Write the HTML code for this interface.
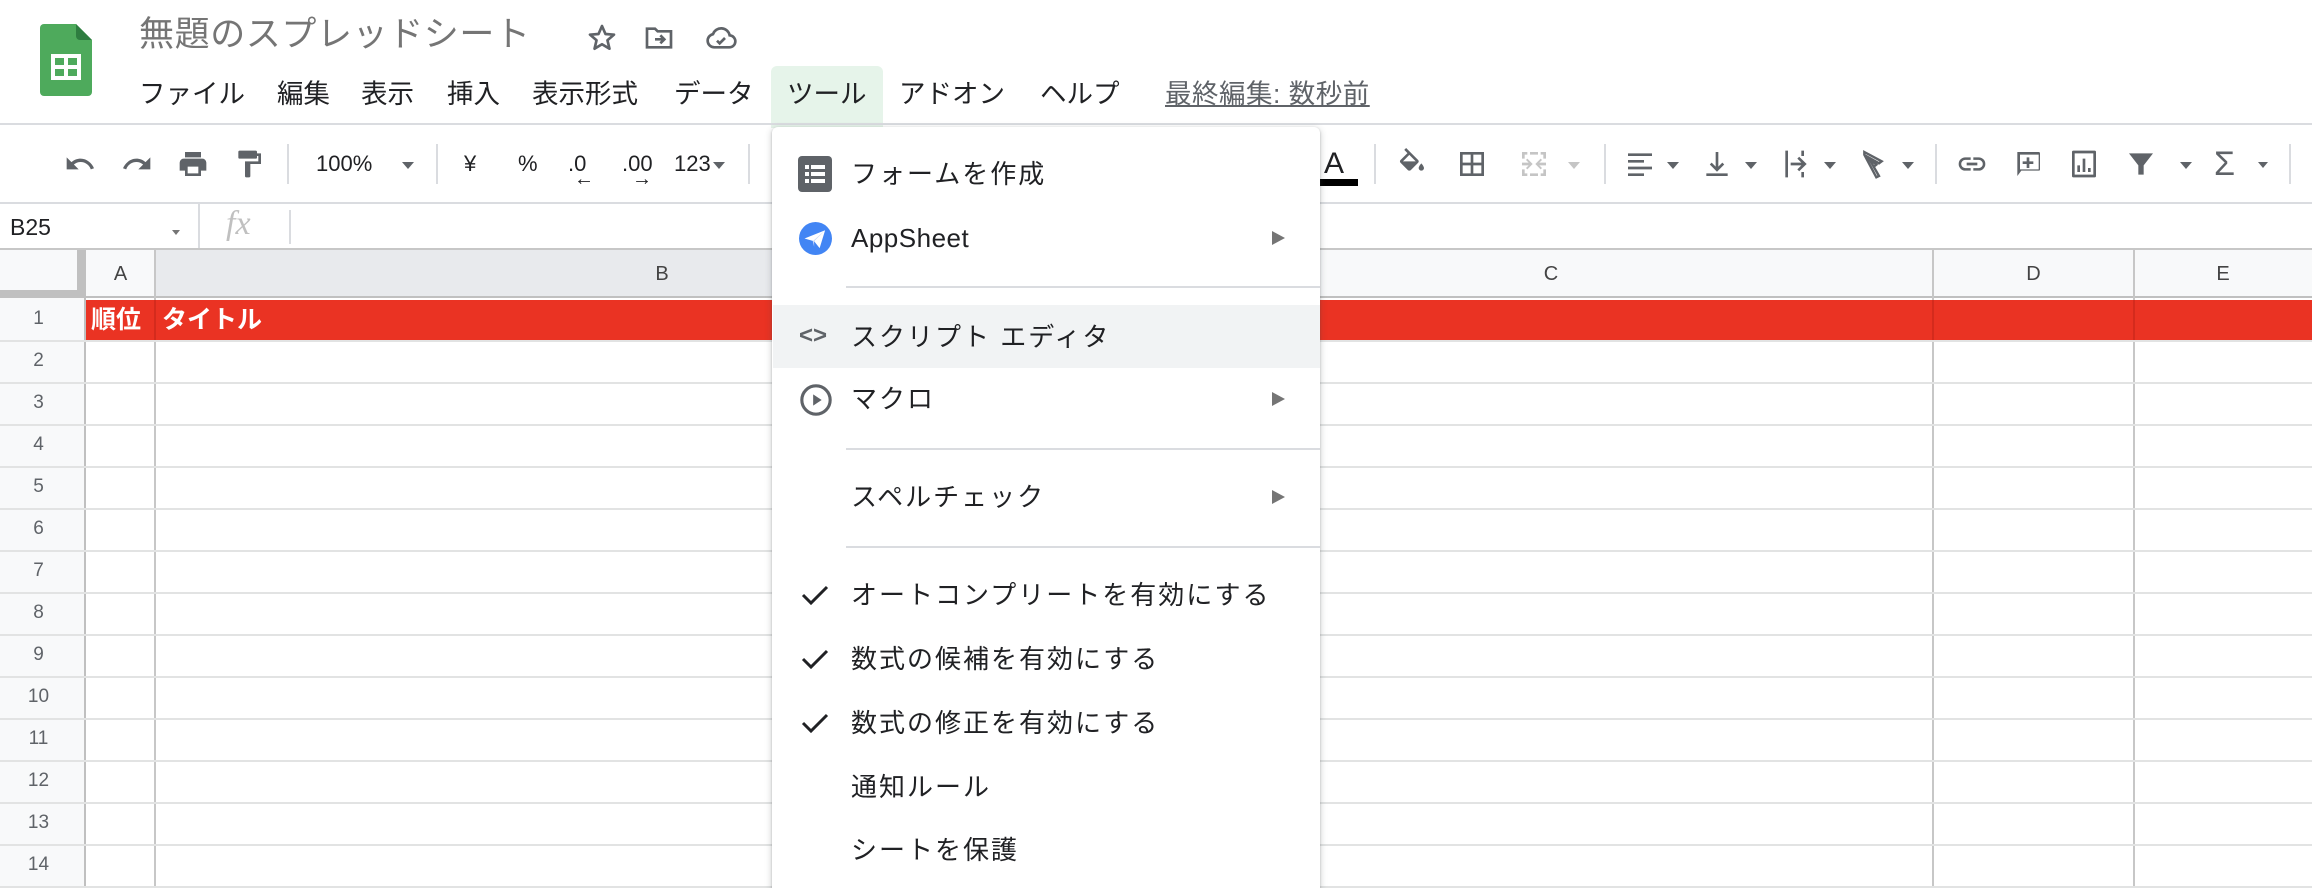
<!DOCTYPE html>
<html><head><meta charset="utf-8">
<style>
*{margin:0;padding:0;box-sizing:border-box}
body{width:2312px;height:888px;overflow:hidden;background:#fff;font-family:"Liberation Sans","Noto Sans CJK JP",sans-serif;position:relative;color:#202124}
.a{position:absolute}
.mb{position:absolute;top:76px;font-size:26.5px;color:#202124;line-height:36px}
.tb{position:absolute;top:146px;height:36px;color:#5f6368;font-size:22px;line-height:36px}
.sep{position:absolute;width:2px;background:#dadce0}
.row{position:absolute;left:0;width:2312px;height:2px;background:#e2e3e3}
.rn{position:absolute;left:0;width:77px;text-align:center;font-size:19px;color:#5f6368;line-height:42px}
.vl{position:absolute;top:250px;width:2px;height:638px;background:#e2e3e3}
.mi{position:absolute;left:851px;font-size:26px;color:#202124;letter-spacing:2px;line-height:40px}
.arr{position:absolute;left:1272px;width:0;height:0;border-top:7px solid transparent;border-bottom:7px solid transparent;border-left:13px solid #757575}
.msep{position:absolute;left:846px;width:474px;height:2px;background:#dadce0}
.chk{position:absolute;left:800px}
.dd{display:inline-block;width:0;height:0;border-left:6px solid transparent;border-right:6px solid transparent;border-top:7px solid #5f6368;vertical-align:middle}
</style></head><body>

<!-- logo -->
<svg class="a" style="left:40px;top:24px" width="52" height="72" viewBox="0 0 52 72">
<path d="M4 0H36L52 16V68a4 4 0 0 1-4 4H4a4 4 0 0 1-4-4V4a4 4 0 0 1 4-4z" fill="#4eaa5c"/>
<path d="M36 0L52 16H40a4 4 0 0 1-4-4z" fill="#2e7d40"/>
<rect x="11" y="30" width="30" height="26" fill="#fff"/>
<rect x="15" y="34" width="9" height="7" fill="#4eaa5c"/><rect x="28" y="34" width="9" height="7" fill="#4eaa5c"/>
<rect x="15" y="45" width="9" height="7" fill="#4eaa5c"/><rect x="28" y="45" width="9" height="7" fill="#4eaa5c"/>
</svg>
<div class="a" style="left:139px;top:13px;font-size:35px;letter-spacing:0.6px;color:#757575;line-height:44px">無題のスプレッドシート</div>
<svg class="a" style="left:586px;top:22px" width="32" height="32" viewBox="0 0 24 24"><path d="M12 3l2.6 6 6.4.5-4.9 4.2 1.5 6.3L12 16.7 6.4 20l1.5-6.3L3 9.5 9.4 9z" fill="none" stroke="#5f6368" stroke-width="2" stroke-linejoin="round"/></svg>
<svg class="a" style="left:643px;top:22px" width="32" height="32" viewBox="0 0 24 24"><path d="M3 5h6l2 2h10v12H3z" fill="none" stroke="#5f6368" stroke-width="2"/><path d="M9 13h7m-3-3l3 3-3 3" fill="none" stroke="#5f6368" stroke-width="2"/></svg>
<svg class="a" style="left:705px;top:22px" width="32" height="32" viewBox="0 0 24 24"><path d="M7 19a5 5 0 0 1-1-9.9A6.5 6.5 0 0 1 18.5 10 4.5 4.5 0 0 1 18 19z" fill="none" stroke="#5f6368" stroke-width="2"/><path d="M9 14l2 2 4-4" fill="none" stroke="#5f6368" stroke-width="2"/></svg>

<div class="a" style="left:771px;top:66px;width:112px;height:62px;background:#e6f4ea;border-radius:6px 6px 0 0"></div>
<div class="mb" style="left:139px">ファイル</div>
<div class="mb" style="left:277px">編集</div>
<div class="mb" style="left:361px">表示</div>
<div class="mb" style="left:447px">挿入</div>
<div class="mb" style="left:532px">表示形式</div>
<div class="mb" style="left:674px">データ</div>
<div class="mb" style="left:787px">ツール</div>
<div class="mb" style="left:899px">アドオン</div>
<div class="mb" style="left:1040px">ヘルプ</div>
<div class="mb" style="left:1165px;color:#5f6368;text-decoration:underline;letter-spacing:0.5px">最終編集: 数秒前</div>

<div class="a" style="left:0;top:123px;width:2312px;height:2px;background:#dadce0"></div>

<!-- toolbar -->
<svg class="a" style="left:64px;top:148px" width="32" height="32" viewBox="0 0 24 24"><path d="M12.5 8c-2.6 0-5 1-6.9 2.6L2 7v9h9l-3.6-3.6c1.4-1.2 3.2-1.9 5.1-1.9 3.5 0 6.5 2.3 7.6 5.5l2.4-.8C21 11.5 17.1 8 12.5 8z" fill="#5f6368"/></svg>
<svg class="a" style="left:121px;top:148px" width="32" height="32" viewBox="0 0 24 24"><path d="M11.5 8c2.6 0 5 1 6.9 2.6L22 7v9h-9l3.6-3.6c-1.4-1.2-3.200-1.9-5.1-1.9-3.5 0-6.5 2.3-7.6 5.5L1.5 15.2C3 11.5 6.9 8 11.5 8z" fill="#5f6368"/></svg>
<svg class="a" style="left:177px;top:148px" width="32" height="32" viewBox="0 0 24 24"><path d="M19 8H5a3 3 0 0 0-3 3v6h4v4h12v-4h4v-6a3 3 0 0 0-3-3zm-3 11H8v-5h8zM18 3H6v4h12z" fill="#5f6368"/></svg>
<svg class="a" style="left:233px;top:148px" width="32" height="32" viewBox="0 0 24 24"><path d="M18 4V3a1 1 0 0 0-1-1H5a1 1 0 0 0-1 1v4a1 1 0 0 0 1 1h12a1 1 0 0 0 1-1V6h1v4H9v11a1 1 0 0 0 1 1h2a1 1 0 0 0 1-1v-9h8V4z" fill="#5f6368"/></svg>
<div class="sep" style="left:287px;top:144px;height:40px"></div>
<div class="tb" style="left:316px;color:#202124">100%</div>
<div class="tb" style="left:402px"><span class="dd"></span></div>
<div class="sep" style="left:436px;top:144px;height:40px"></div>
<div class="tb" style="left:464px;color:#202124">¥</div>
<div class="tb" style="left:518px;color:#202124">%</div>
<div class="tb" style="left:568px;color:#202124">.0</div>
<div class="a" style="left:574px;top:168px;font-size:20px;font-weight:bold;color:#202124">←</div>
<div class="tb" style="left:622px;color:#202124">.00</div>
<div class="a" style="left:632px;top:168px;font-size:20px;font-weight:bold;color:#202124">→</div>
<div class="tb" style="left:674px;color:#202124">123<span class="dd" style="margin-left:2px"></span></div>
<div class="sep" style="left:748px;top:144px;height:40px"></div>

<div class="tb" style="left:1324px;color:#202124;font-size:30px">A</div>
<div class="a" style="left:1320px;top:179px;width:38px;height:7px;background:#000"></div>
<div class="sep" style="left:1374px;top:144px;height:40px"></div>
<svg class="a" style="left:1396px;top:148px" width="32" height="32" viewBox="0 0 24 24"><path d="M16.6 9L7.6 0 6.2 1.4l2.4 2.4-5.2 5.2c-.6.6-.6 1.5 0 2.1l5.5 5.5c.3.3.7.4 1.1.4s.8-.1 1.1-.4l5.5-5.5c.6-.6.6-1.5 0-2.1zM5.2 10L10 5.2 14.8 10zM19 11.5s-2 2.2-2 3.5a2 2 0 0 0 4 0c0-1.3-2-3.5-2-3.5z" fill="#5f6368"/></svg>
<svg class="a" style="left:1456px;top:148px" width="32" height="32" viewBox="0 0 24 24"><path d="M3 3v18h18V3zm8 16H5v-6h6zm0-8H5V5h6zm8 8h-6v-6h6zm0-8h-6V5h6z" fill="#5f6368"/></svg>
<svg class="a" style="left:1518px;top:148px" width="32" height="32" viewBox="0 0 24 24"><path d="M3 3h4v2H5v3H3zm14 0h4v5h-2V5h-2zM3 16h2v3h2v2H3zm16 0h2v5h-4v-2h2zM9 3h6v2H9zm0 16h6v2H9zM3 11h5l-2-2 1-1 4 4-4 4-1-1 2-2H3zm18 2h-5l2 2-1 1-4-4 4-4 1 1-2 2h5z" fill="#c5c5c5"/></svg>
<div class="tb" style="left:1568px"><span class="dd" style="border-top-color:#c5c5c5"></span></div>
<div class="sep" style="left:1604px;top:144px;height:40px"></div>
<svg class="a" style="left:1624px;top:148px" width="32" height="32" viewBox="0 0 24 24"><path d="M3 4h18v2H3zm0 5h12v2H3zm0 5h18v2H3zm0 5h12v2H3z" fill="#5f6368"/></svg>
<div class="tb" style="left:1667px"><span class="dd"></span></div>
<svg class="a" style="left:1701px;top:148px" width="32" height="32" viewBox="0 0 24 24"><path d="M11 3h2v11l3-3 1.4 1.4L12 17.8 6.6 12.4 8 11l3 3zM4 19h16v2H4z" fill="#5f6368"/></svg>
<div class="tb" style="left:1745px"><span class="dd"></span></div>
<svg class="a" style="left:1780px;top:148px" width="32" height="32" viewBox="0 0 24 24"><path d="M4 2h2v20H4zm12 0h2v4h-2zm0 16h2v4h-2zM8 11h8l-3-3 1.4-1.4L20 12l-5.6 5.4L13 16l3-3H8z" fill="#5f6368"/></svg>
<div class="tb" style="left:1824px"><span class="dd"></span></div>
<svg class="a" style="left:1859px;top:148px" width="32" height="32" viewBox="0 0 24 24"><path d="M4 3l13 7-2 1.5L7 7l8 14-2 1L4 5zm3.5 4.5L11 14l2-1.5z" fill="none" stroke="#5f6368" stroke-width="1.8"/></svg>
<div class="tb" style="left:1902px"><span class="dd"></span></div>
<div class="sep" style="left:1935px;top:144px;height:40px"></div>
<svg class="a" style="left:1956px;top:148px" width="32" height="32" viewBox="0 0 24 24"><path d="M3.9 12a3.1 3.1 0 0 1 3.1-3.1h4V7H7a5 5 0 0 0 0 10h4v-1.9H7A3.1 3.1 0 0 1 3.9 12zM8 13h8v-2H8zm9-6h-4v1.9h4a3.1 3.1 0 0 1 0 6.2h-4V17h4a5 5 0 0 0 0-10z" fill="#5f6368"/></svg>
<svg class="a" style="left:2012px;top:148px" width="32" height="32" viewBox="0 0 24 24"><path d="M4 3h16a1 1 0 0 1 1 1v12a1 1 0 0 1-1 1H7l-3 4zm2 2v11h14V5zm5 2h2v3h3v2h-3v3h-2v-3H8v-2h3z" fill="#5f6368"/></svg>
<svg class="a" style="left:2068px;top:148px" width="32" height="32" viewBox="0 0 24 24"><path d="M4 2h16a1 1 0 0 1 1 1v18a1 1 0 0 1-1 1H4a1 1 0 0 1-1-1V3a1 1 0 0 1 1-1zm1 2v16h14V4zm2 9h2v5H7zm4-5h2v10h-2zm4 7h2v3h-2z" fill="#5f6368"/></svg>
<svg class="a" style="left:2125px;top:148px" width="32" height="32" viewBox="0 0 24 24"><path d="M3 4h18l-7 9v7h-4v-7z" fill="#5f6368"/></svg>
<div class="tb" style="left:2180px"><span class="dd"></span></div>
<div class="tb" style="left:2214px;font-size:34px;color:#5f6368">Σ</div>
<div class="tb" style="left:2258px"><span class="dd" style="border-left-width:5px;border-right-width:5px;border-top-width:6px"></span></div>
<div class="sep" style="left:2289px;top:144px;height:40px"></div>

<div class="a" style="left:0;top:202px;width:2312px;height:2px;background:#dadce0"></div>
<!-- formula bar -->
<div class="a" style="left:10px;top:210px;font-size:23px;line-height:34px;color:#202124">B25</div>
<div class="a" style="left:172px;top:224px"><span class="dd" style="border-left-width:4px;border-right-width:4px;border-top-width:5px;border-top-color:#757575"></span></div>
<div class="sep" style="left:198px;top:204px;height:46px"></div>
<div class="a" style="left:226px;top:204px;font-family:'Liberation Serif',serif;font-style:italic;font-size:34px;color:#c0c0c0;line-height:40px">fx</div>
<div class="sep" style="left:289px;top:210px;height:34px"></div>
<div class="a" style="left:0;top:248px;width:2312px;height:2px;background:#c7c7c7"></div>

<!-- column headers -->
<div class="a" style="left:0;top:250px;width:2312px;height:48px;background:#f8f9fa"></div>
<div class="a" style="left:155px;top:250px;width:1014px;height:48px;background:#e8eaed"></div>
<div class="a" style="left:77px;top:250px;width:8px;height:48px;background:#c0c0c0"></div>
<div class="a" style="left:0;top:290px;width:85px;height:8px;background:#c0c0c0"></div>
<div class="a" style="left:86px;top:250px;width:69px;text-align:center;font-size:20px;line-height:48px;color:#444">A</div>
<div class="a" style="left:155px;top:250px;width:1014px;text-align:center;font-size:20px;line-height:48px;color:#444">B</div>
<div class="a" style="left:1169px;top:250px;width:764px;text-align:center;font-size:20px;line-height:48px;color:#444">C</div>
<div class="a" style="left:1933px;top:250px;width:201px;text-align:center;font-size:20px;line-height:48px;color:#444">D</div>
<div class="a" style="left:2134px;top:250px;width:178px;text-align:center;font-size:20px;line-height:48px;color:#444">E</div>
<div class="a" style="left:0;top:296px;width:2312px;height:2px;background:#c0c0c0"></div>

<div class="a" style="left:0;top:298px;width:84px;height:590px;background:#f8f9fa"></div>
<div class="vl" style="left:84px;background:#c0c0c0"></div>
<div class="vl" style="left:154px;background:#c7c7c7"></div>
<div class="vl" style="left:1168px"></div>
<div class="vl" style="left:1932px;background:#c7c7c7"></div>
<div class="vl" style="left:2133px;background:#c7c7c7"></div>

<div class="a" style="left:86px;top:300px;width:2226px;height:41px;background:#ea3323"></div>
<div class="a" style="left:154px;top:300px;width:2px;height:41px;background:#d42b1d"></div>
<div class="a" style="left:1932px;top:300px;width:2px;height:41px;background:#d42b1d"></div>
<div class="a" style="left:2133px;top:300px;width:2px;height:41px;background:#d42b1d"></div>
<div class="a" style="left:91px;top:300px;font-size:25px;font-weight:bold;color:#fff;line-height:41px">順位</div>
<div class="a" style="left:162px;top:300px;font-size:25px;font-weight:bold;color:#fff;line-height:41px">タイトル</div>

<div class="row" style="top:340px"></div><div class="row" style="top:382px"></div><div class="row" style="top:424px"></div>
<div class="row" style="top:466px"></div><div class="row" style="top:508px"></div><div class="row" style="top:550px"></div>
<div class="row" style="top:592px"></div><div class="row" style="top:634px"></div><div class="row" style="top:676px"></div>
<div class="row" style="top:718px"></div><div class="row" style="top:760px"></div><div class="row" style="top:802px"></div>
<div class="row" style="top:844px"></div><div class="row" style="top:886px"></div>

<div class="rn" style="top:298px">1</div><div class="rn" style="top:340px">2</div><div class="rn" style="top:382px">3</div>
<div class="rn" style="top:424px">4</div><div class="rn" style="top:466px">5</div><div class="rn" style="top:508px">6</div>
<div class="rn" style="top:550px">7</div><div class="rn" style="top:592px">8</div><div class="rn" style="top:634px">9</div>
<div class="rn" style="top:676px">10</div><div class="rn" style="top:718px">11</div><div class="rn" style="top:760px">12</div>
<div class="rn" style="top:802px">13</div><div class="rn" style="top:844px">14</div>

<!-- dropdown menu -->
<div class="a" style="left:772px;top:127px;width:548px;height:761px;background:#fff;border-radius:6px 6px 0 0;box-shadow:0 2px 6px 2px rgba(60,64,67,.15),0 1px 2px rgba(60,64,67,.3)"></div>
<svg class="a" style="left:798px;top:156px" width="34" height="36" viewBox="0 0 34 36"><rect width="34" height="36" rx="4" fill="#5f6368"/><rect x="7" y="9" width="4" height="4" fill="#fff"/><rect x="13" y="9" width="14" height="4" fill="#fff"/><rect x="7" y="16" width="4" height="4" fill="#fff"/><rect x="13" y="16" width="14" height="4" fill="#fff"/><rect x="7" y="23" width="4" height="4" fill="#fff"/><rect x="13" y="23" width="14" height="4" fill="#fff"/></svg>
<div class="mi" style="top:154px">フォームを作成</div>
<svg class="a" style="left:799px;top:222px" width="33" height="33" viewBox="0 0 24 24"><circle cx="12" cy="12" r="12" fill="#4285f4"/><path d="M4 12l15-6-4 13-4-5z" fill="#fff"/><path d="M11 14l8-8-9 8 1 4z" fill="#c6d6f8"/></svg>
<div class="mi" style="top:218px;letter-spacing:0.5px">AppSheet</div>
<div class="arr" style="top:231px"></div>
<div class="msep" style="top:286px"></div>
<div class="a" style="left:773px;top:305px;width:547px;height:63px;background:#f1f3f4"></div>
<div class="a" style="left:799px;top:318px;font-size:24px;color:#5f6368;font-weight:bold;line-height:36px">&lt;&gt;</div>
<div class="mi" style="top:317px">スクリプト エディタ</div>
<svg class="a" style="left:799px;top:383px" width="34" height="34" viewBox="0 0 24 24"><circle cx="12" cy="12" r="10" fill="none" stroke="#5f6368" stroke-width="2.2"/><path d="M10 8l6 4-6 4z" fill="#5f6368"/></svg>
<div class="mi" style="top:379px">マクロ</div>
<div class="arr" style="top:392px"></div>
<div class="msep" style="top:448px"></div>
<div class="mi" style="top:477px">スペルチェック</div>
<div class="arr" style="top:490px"></div>
<div class="msep" style="top:546px"></div>
<svg class="chk" style="top:583px" width="30" height="24" viewBox="0 0 30 24"><path d="M3 12l8 8L27 4" fill="none" stroke="#202124" stroke-width="3"/></svg>
<div class="mi" style="top:575px">オートコンプリートを有効にする</div>
<svg class="chk" style="top:647px" width="30" height="24" viewBox="0 0 30 24"><path d="M3 12l8 8L27 4" fill="none" stroke="#202124" stroke-width="3"/></svg>
<div class="mi" style="top:639px">数式の候補を有効にする</div>
<svg class="chk" style="top:711px" width="30" height="24" viewBox="0 0 30 24"><path d="M3 12l8 8L27 4" fill="none" stroke="#202124" stroke-width="3"/></svg>
<div class="mi" style="top:703px">数式の修正を有効にする</div>
<div class="mi" style="top:767px">通知ルール</div>
<div class="mi" style="top:830px">シートを保護</div>
</body></html>
